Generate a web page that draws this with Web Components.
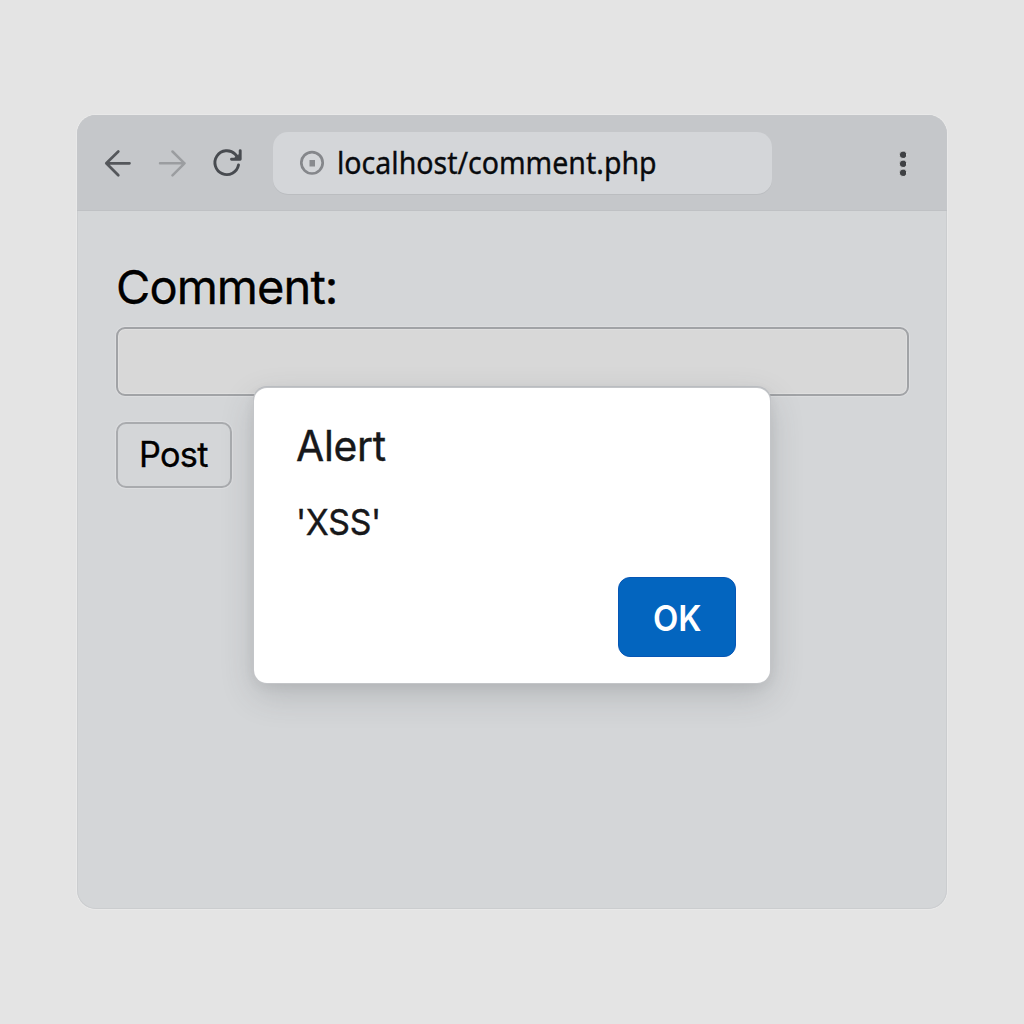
<!DOCTYPE html>
<html lang="en">
<head>
<meta charset="utf-8">
<title>Comment</title>
<style>
html,body{margin:0;height:100%}
body{background:#e4e4e4;font-family:Inter,"Liberation Sans",sans-serif;display:flex;justify-content:center;height:1024px;overflow:hidden}
browser-window{margin-top:115px}
</style>
</head>
<body>
<browser-window>
  <nav-bar slot="bar"><fit-text width="320">localhost/comment.php</fit-text></nav-bar>
  <comment-form></comment-form>
  <alert-dialog slot="dialog">
    <fit-text slot="title" width="89.5">Alert</fit-text>
    <fit-text slot="message" width="84.5">'XSS'</fit-text>
    <fit-text slot="action" width="49">OK</fit-text>
  </alert-dialog>
</browser-window>
<script>
class Base extends HTMLElement{
  constructor(){super();this.attachShadow({mode:'open'}).innerHTML=this.constructor.markup;}
}
/* Text condensed to a given width */
class FitText extends Base{
  static markup=`<style>:host{display:block;white-space:nowrap}
    span{display:inline-block;transform-origin:0 50%}</style><span><slot></slot></span>`;
  connectedCallback(){
    const s=this.shadowRoot.querySelector('span'),w=+this.getAttribute('width');
    this.style.width=w+'px';
    s.style.transform='scaleX('+w/s.offsetWidth+')';
  }
}
class BrowserWindow extends Base{
  static markup=`<style>:host{display:flex;flex-direction:column;position:relative;width:870px;height:794px;
    border-radius:19px;background:#d4d6d8;overflow:hidden;box-shadow:inset 0 0 0 1px #cbcdcf,0 0 0 1px #e9e9e9}
    main{flex:1}</style><slot name="bar"></slot><main><slot></slot></main><slot name="dialog"></slot>`;
}
class NavBar extends Base{
  static markup=`<style>
    :host{display:flex;align-items:center;height:96px;box-sizing:border-box;padding:0 36px 0 27px;background:#c5c7ca;border-bottom:1px solid #bfc1c4}
    svg{display:block;flex:none;fill:none;stroke-linecap:round;stroke-linejoin:round}
    .back{margin-right:26px}.fwd{margin-right:26px}
    .url{display:flex;align-items:center;box-sizing:border-box;width:499px;height:62px;margin-left:30px;padding-left:27px;gap:11px;border-radius:15px;
      background:#d4d6d9;box-shadow:0 1px 0 #bbbdc0;font:31px "Noto Sans","Liberation Sans",sans-serif;color:#080a0d;text-shadow:0 0 1px #eee;-webkit-text-stroke:.4px #080a0d}
    slot{display:block;margin-top:-2px}
    .menu{margin-left:auto}
    </style>
    <svg class="back" width="28" height="30" stroke="#55575b" stroke-width="2.700"><path d="M25.500 15.300H2.500M14.300 3.500 2.300 15.300l12 12"/></svg>
    <svg class="fwd" width="28" height="30" stroke="#9b9da0" stroke-width="2.500"><path d="M2 15.300h24.500M14.500 3.500 26.500 15.300 14.500 27.300"/></svg>
    <svg class="reload" width="31" height="30" stroke="#484b50" stroke-width="2.900"><path d="M26.500 17A11.900 11.900 0 1 1 23.300 6.300L26.500 10.500M28.200 2.600v8.700H19.500"/><path d="M28 11.500l-7-.5 5.500-5z" fill="#484b50" stroke="none"/></svg>
    <div class="url"><svg width="26" height="26"><circle cx="12" cy="12.800" r="10.700" stroke="#85878b" stroke-width="2.700"/><path d="M9.500 10h5.500v6.500h-5.500z" fill="#888a8e"/></svg><slot></slot></div>
    <svg class="menu" width="16" height="34" style="fill:#3f4144" stroke="#dddee0" stroke-width=".8"><circle cx="8" cy="8.800" r="3.700"/><circle cx="8" cy="17.800" r="3.700"/><circle cx="8" cy="26.800" r="3.700"/></svg>`;
}
class CommentForm extends Base{
  static markup=`<style>
    :host{display:flex;flex-direction:column;align-items:flex-start;padding:47px 38px 0 39px;color:#000;text-shadow:0 0 1.5px #fff;-webkit-text-stroke:.4px #000}
    label{font-size:47px;line-height:58px;height:58px;letter-spacing:-.02em}
    input{box-sizing:border-box;width:100%;height:69px;margin:11px 0 26px;border:2px solid #a1a3a6;border-radius:9px;background:#d8d8d8;box-shadow:0 0 0 1px #dcdddf,inset 0 0 0 1px #dfdfdf;outline:0}
    button{box-sizing:border-box;width:116px;height:66px;padding:0 0 2px 21px;border:2px solid #a9abae;border-radius:10px;background:#d4d6d8;box-shadow:0 0 0 1px #dcdddf;color:#000;font:35px Inter,sans-serif;letter-spacing:-.02em;text-shadow:inherit;text-align:left}
    </style><label><fit-text width="221">Comment:</fit-text></label><input aria-label="Comment"><button><fit-text width="68.5">Post</fit-text></button>`;
}
class AlertDialog extends Base{
  static markup=`<style>
    :host{position:absolute;left:177px;top:273px;width:516px;height:295px;box-sizing:border-box;display:flex;flex-direction:column;align-items:flex-start;
      padding:31px 34px 26px 42px;border-radius:13px;background:#fff;color:#17181a;-webkit-text-stroke:.4px #17181a;letter-spacing:-.02em;box-shadow:0 0 0 1px #c3c5c8,0 -1px 0 1px #b9bcc0,0 12px 34px rgba(60,65,70,.2),0 3px 12px rgba(60,65,70,.08)}
    .t{font-size:42px;line-height:54px}
    .m{font-size:36px;line-height:44px;margin-top:27px}
    button{box-sizing:border-box;width:118px;height:80px;align-self:flex-end;margin-top:auto;padding:2px 0 0 34px;border:1px solid #0656b5;border-radius:12px;background:#0365bf;color:#fff;font:600 35px Inter,sans-serif;text-align:left;-webkit-text-stroke:0}
    </style><div class="t"><slot name="title"></slot></div><div class="m"><slot name="message"></slot></div><button><slot name="action"></slot></button>`;
}
customElements.define('browser-window',BrowserWindow);
customElements.define('nav-bar',NavBar);
customElements.define('comment-form',CommentForm);
customElements.define('alert-dialog',AlertDialog);
customElements.define('fit-text',FitText);
</script>
</body>
</html>
